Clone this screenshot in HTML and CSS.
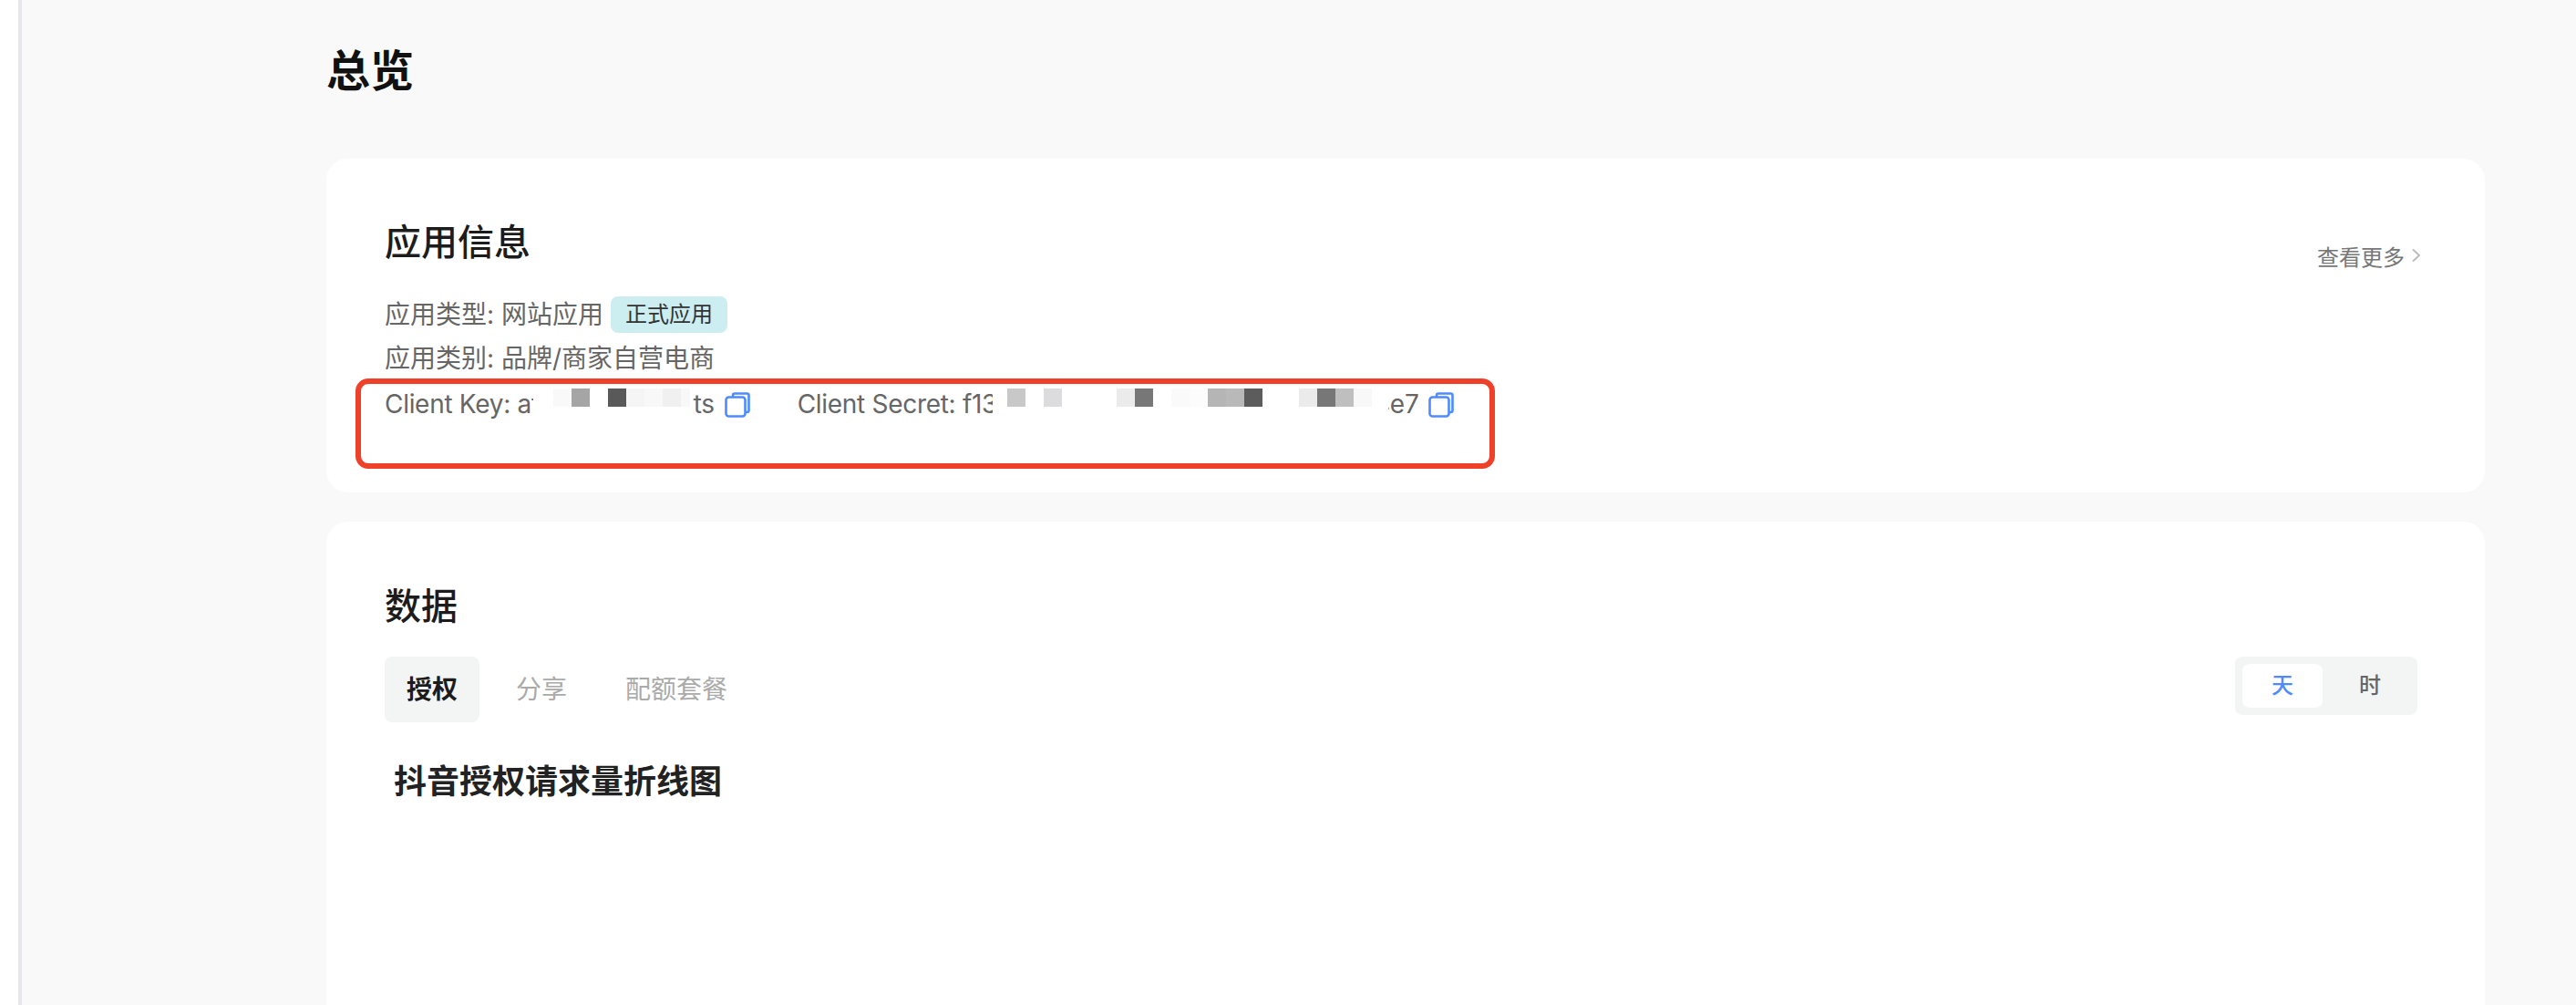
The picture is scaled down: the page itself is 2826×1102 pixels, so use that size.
FILE: index.html
```html
<!DOCTYPE html>
<html lang="zh-CN">
<head>
    <meta charset="UTF-8">
    <title>总览</title>
    <link rel="stylesheet" href="styles.css">
</head>
<body>
    <div class="side-edge"></div>
    <main class="content">
        <h1 class="page-title">总览</h1>

        <section class="card card-info">
            <div class="info-main">
                <h2 class="card-title">应用信息</h2>
                <div class="info-row">应用类型: 网站应用<span class="tag">正式应用</span></div>
                <div class="info-row">应用类别: 品牌/商家自营电商</div>
                <div class="info-row info-keys">
                    <span class="key-text">Client Key: af</span>
                    <span class="mask mask-key">
                        <i class="px" style="background:#f9f9f9"></i>
                        <i class="px" style="background:#a5a5a5"></i>
                        <i class="px" style="background:#fff"></i>
                        <i class="px" style="background:#595959"></i>
                        <i class="px" style="background:#f5f5f5"></i>
                        <i class="px" style="background:#f8f8f8"></i>
                        <i class="px" style="background:#f0f0f0"></i>
                        <i class="px px-half" style="background:#f8f8f8"></i>
                    </span>
                    <span class="key-text">rts</span>
                    <svg class="copy" viewBox="0 0 28 28" fill="none">
                        <path d="M9 5V3.500C9 2.400 9.900 1.500 11 1.500H24.500C25.600 1.500 26.500 2.400 26.500 3.500V20C26.500 21.100 25.600 22 24.500 22H23"/>
                        <rect x="1.500" y="5.500" width="21" height="21" rx="3"/>
                    </svg>
                    <span class="key-text key-secret">Client Secret: f13</span>
                    <span class="mask mask-secret">
                        <i class="px" style="background:#c8c8c8"></i>
                        <i class="px" style="background:#fff"></i>
                        <i class="px" style="background:#dcdcdf"></i>
                        <i class="px" style="background:#fff"></i>
                        <i class="px" style="background:#fff"></i>
                        <i class="px" style="background:#fff"></i>
                        <i class="px" style="background:#ebebeb"></i>
                        <i class="px" style="background:#777"></i>
                        <i class="px" style="background:#fff"></i>
                        <i class="px" style="background:#fafafa"></i>
                        <i class="px" style="background:#fcfcfc"></i>
                        <i class="px" style="background:#b5b5b5"></i>
                        <i class="px" style="background:#b9b9b9"></i>
                        <i class="px" style="background:#5c5c5c"></i>
                        <i class="px" style="background:#fff"></i>
                        <i class="px" style="background:#fff"></i>
                        <i class="px" style="background:#ebebeb"></i>
                        <i class="px" style="background:#777"></i>
                        <i class="px" style="background:#bfbfbf"></i>
                        <i class="px" style="background:#f8f8f8"></i>
                    </span>
                    <span class="key-text">4e7</span>
                    <svg class="copy" viewBox="0 0 28 28" fill="none">
                        <path d="M9 5V3.500C9 2.400 9.900 1.500 11 1.500H24.500C25.600 1.500 26.500 2.400 26.500 3.500V20C26.500 21.100 25.600 22 24.500 22H23"/>
                        <rect x="1.500" y="5.500" width="21" height="21" rx="3"/>
                    </svg>
                </div>
            </div>
            <a class="more">查看更多
                <svg class="more-arrow" viewBox="0 0 9 16" fill="none"><path d="M1 1.500L8 8L1 14.500"/></svg>
            </a>
            <div class="note-box"></div>
        </section>

        <section class="card card-data">
            <h2 class="card-title">数据</h2>
            <div class="data-bar">
                <div class="tabs">
                    <span class="tab tab-active">授权</span>
                    <span class="tab">分享</span>
                    <span class="tab">配额套餐</span>
                </div>
                <div class="segment">
                    <span class="seg seg-active">天</span>
                    <span class="seg">时</span>
                </div>
            </div>
            <h3 class="chart-title">抖音授权请求量折线图</h3>
        </section>
    </main>
</body>
</html>
```
FILE: styles.css
```css
body {
    margin: 0;
    height: 1102px;
    overflow: hidden;
    display: flex;
    background-color: #f9f9f9;
    font-family: Inter, "Noto Sans CJK SC", sans-serif;
    color: #666;
}
.side-edge {
    width: 20px;
    flex: none;
    background: #fff;
    border-right: 4px solid #e6e6ec;
}
.content {
    flex: none;
    width: 2368px;
    margin-left: 334px;
}
.page-title {
    margin: 0;
    padding-top: 50px;
    height: 174px;
    box-sizing: border-box;
    font-size: 48px;
    line-height: 56px;
    font-weight: 600;
    color: #111;
}
.card {
    position: relative;
    background: #fff;
    border-radius: 24px;
    padding: 64px 64px 0;
    box-sizing: border-box;
}
.card-info {
    height: 366px;
    display: flex;
    justify-content: space-between;
}
.card-data {
    height: 530px;
    margin-top: 32px;
    padding-top: 65px;
    border-radius: 24px 24px 0 0;
}
.card-title {
    margin: 0 0 27px;
    font-size: 40px;
    line-height: 56px;
    font-weight: 500;
    color: #1c1c1c;
}
.info-row {
    display: flex;
    align-items: center;
    height: 48px;
    font-size: 28px;
    line-height: 48px;
}
.tag {
    margin-left: 8px;
    padding: 0 16px;
    height: 40px;
    line-height: 40px;
    font-size: 24px;
    color: #333;
    background: #cdeef0;
    border-radius: 8px;
}
.info-keys {
    margin-top: 2px;
    align-items: flex-start;
}
.key-text {
    white-space: nowrap;
    letter-spacing: -0.3px;
}
.key-secret {
    margin-left: 52px;
}
.mask {
    display: flex;
    height: 40px;
    padding-top: 7px;
    box-sizing: border-box;
    background: #fff;
    position: relative;
}
.mask-key {
    margin-left: -8px;
    margin-right: -10px;
    padding-left: 22px;
    padding-right: 3px;
}
.mask-secret {
    margin-left: -5px;
    margin-right: -16px;
    padding-left: 16px;
    padding-right: 18px;
}
.px {
    display: block;
    width: 20px;
    height: 20px;
}
.px-half {
    width: 10px;
}
.copy {
    width: 28px;
    height: 28px;
    margin: 11px 0 0 11px;
    flex: none;
}
.copy path, .copy rect {
    stroke: #4e8bff;
    stroke-width: 2.600;
}
.more {
    display: flex;
    align-items: center;
    gap: 8px;
    height: 34px;
    margin: 25px 7px 0 0;
    font-size: 24px;
    color: #777;
}
.more-arrow {
    width: 9px;
    height: 16px;
}
.more-arrow path {
    stroke: #bdbdbd;
    stroke-width: 2;
}
.note-box {
    position: absolute;
    left: 32px;
    top: 241px;
    width: 1250px;
    height: 99px;
    box-sizing: border-box;
    border: 6px solid #ef4129;
    border-radius: 14px;
}
.data-bar {
    display: flex;
    justify-content: space-between;
    align-items: flex-start;
    margin-top: 6px;
    padding-right: 10px;
}
.tabs {
    display: flex;
    gap: 16px;
}
.tab {
    height: 72px;
    line-height: 72px;
    padding: 0 24px;
    font-size: 28px;
    color: #aaa;
    border-radius: 8px;
}
.tab-active {
    background: #f3f5f5;
    color: #1c1c1c;
    font-weight: 600;
}
.segment {
    display: flex;
    gap: 8px;
    padding: 8px;
    height: 64px;
    box-sizing: border-box;
    background: #f3f5f5;
    border-radius: 8px;
}
.seg {
    width: 88px;
    height: 48px;
    line-height: 48px;
    text-align: center;
    font-size: 24px;
    font-weight: 500;
    color: #666;
    border-radius: 8px;
}
.seg-active {
    background: #fff;
    color: #4e8bff;
}
.chart-title {
    margin: 37px 0 0 10px;
    font-size: 36px;
    line-height: 56px;
    font-weight: 600;
    color: #222;
}
```
